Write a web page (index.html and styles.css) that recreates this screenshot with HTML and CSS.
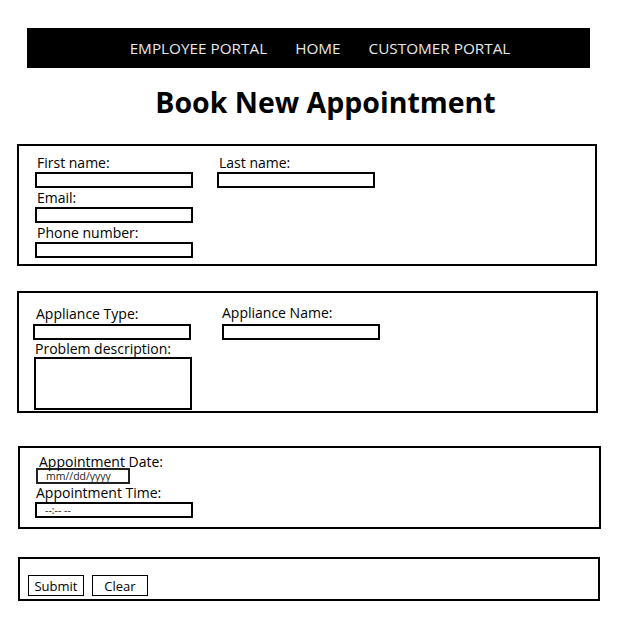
FILE: index.html
```html
<!DOCTYPE html>
<html lang="en">
<head>
<meta charset="utf-8">
<title>Book New Appointment</title>
<link rel="stylesheet" href="styles.css">
</head>
<body>
<nav class="topnav">
  <a href="#">EMPLOYEE PORTAL</a>
  <a href="#">HOME</a>
  <a href="#">CUSTOMER PORTAL</a>
</nav>
<h1 class="title">Book New Appointment</h1>
<form class="booking">
  <div class="box box-customer">
    <div class="field">
      <label>First name:</label>
      <input type="text" class="inp">
    </div>
    <div class="field">
      <label>Last name:</label>
      <input type="text" class="inp">
    </div>
    <div class="field">
      <label>Email:</label>
      <input type="text" class="inp">
    </div>
    <div class="field empty"></div>
    <div class="field">
      <label>Phone number:</label>
      <input type="text" class="inp">
    </div>
  </div>

  <div class="box box-appliance">
    <div class="field">
      <label class="lbl-shift">Appliance Type:</label>
      <input type="text" class="inp">
    </div>
    <div class="field">
      <label class="lbl-flush">Appliance Name:</label>
      <input type="text" class="inp">
    </div>
    <div class="field">
      <label class="lbl-desc">Problem description:</label>
      <textarea class="area"></textarea>
    </div>
  </div>

  <div class="box box-time">
    <label class="lbl-date">Appointment Date:</label>
    <input type="text" class="inp date" placeholder="mm//dd/yyyy">
    <label class="lbl-time">Appointment Time:</label>
    <input type="text" class="inp time" placeholder="--:-- --">
  </div>

  <div class="box box-actions">
    <button type="submit" class="btn">Submit</button>
    <button type="reset" class="btn">Clear</button>
  </div>
</form>
</body>
</html>
```

FILE: styles.css
```css
html, body {
  margin: 0;
  padding: 0;
  background: #fff;
}
body {
  font-family: "Segoe UI", "Open Sans", "Noto Sans", sans-serif;
  color: #000;
  width: 629px;
}
.topnav {
  margin: 28px 0 0 27px;
  width: 563px;
  height: 40px;
  background: #000;
  display: flex;
  justify-content: center;
  align-items: center;
  gap: 28px;
  padding-left: 23px;
  padding-bottom: 1px;
  box-sizing: border-box;
}
.topnav a {
  color: #e8e8e8;
  text-decoration: none;
  font-size: 15.3px;
  letter-spacing: 0;
}
.title {
  margin: 0;
  padding: 16px 0 24px 22px;
  line-height: 36px;
  font-size: 28.5px;
  font-weight: 700;
  text-align: center;
}
.booking {
  display: flex;
  flex-direction: column;
  align-items: flex-start;
}
.box {
  border: 2px solid #000;
  box-sizing: border-box;
}
label {
  display: block;
  font-size: 14px;
  line-height: 19px;
  padding-left: 2px;
}
.inp {
  display: block;
  box-sizing: border-box;
  width: 158px;
  height: 16px;
  margin: 0;
  padding: 0 0 0 8px;
  border: 2px solid #000;
  background: #fff;
  font-family: inherit;
  font-size: 10.5px;
  color: #222;
  outline: none;
}
.inp::placeholder {
  color: #222;
  opacity: 1;
}
.box-customer {
  margin-left: 17px;
  width: 580px;
  height: 122px;
  padding: 7px 0 0 16px;
  display: grid;
  grid-template-columns: 158px 158px;
  column-gap: 24px;
  align-content: start;
}
.box-appliance {
  margin-left: 17px;
  margin-top: 25px;
  width: 581px;
  height: 122px;
  padding: 10px 0 0 14px;
  display: grid;
  grid-template-columns: 158px 158px;
  column-gap: 31px;
  align-content: start;
}
.box-appliance .lbl-shift {
  padding-left: 3px;
  line-height: 21px;
}
.box-appliance .lbl-flush {
  padding-left: 0;
  line-height: 19px;
}
.box-appliance .field:nth-child(2) .inp {
  margin-top: 2px;
}
.box-appliance .lbl-desc {
  line-height: 17px;
}
.area {
  display: block;
  box-sizing: border-box;
  width: 158px;
  height: 53px;
  margin: 0 0 0 1px;
  border: 2px solid #000;
  resize: none;
  padding: 0;
  outline: none;
}
.box-time {
  margin-left: 18px;
  margin-top: 33px;
  width: 583px;
  height: 83px;
  padding: 5px 0 0 15px;
}
.box-time label {
  line-height: 17px;
}
.box-time .lbl-date {
  padding-left: 4px;
}
.box-time .lbl-time {
  padding-left: 1px;
}
.inp.date {
  width: 94px;
  margin: -2px 0 0 1px;
  border-color: #222;
  background: transparent;
}
.inp.time {
  margin-top: 1px;
}
.box-actions {
  margin-left: 18px;
  margin-top: 28px;
  width: 582px;
  height: 44px;
  padding: 16px 0 0 8px;
  display: flex;
  gap: 8px;
  align-items: flex-start;
}
.btn {
  width: 56px;
  height: 21px;
  border: 1px solid #000;
  background: #fff;
  font-family: inherit;
  font-size: 13px;
  padding: 0;
  color: #000;
}
```
